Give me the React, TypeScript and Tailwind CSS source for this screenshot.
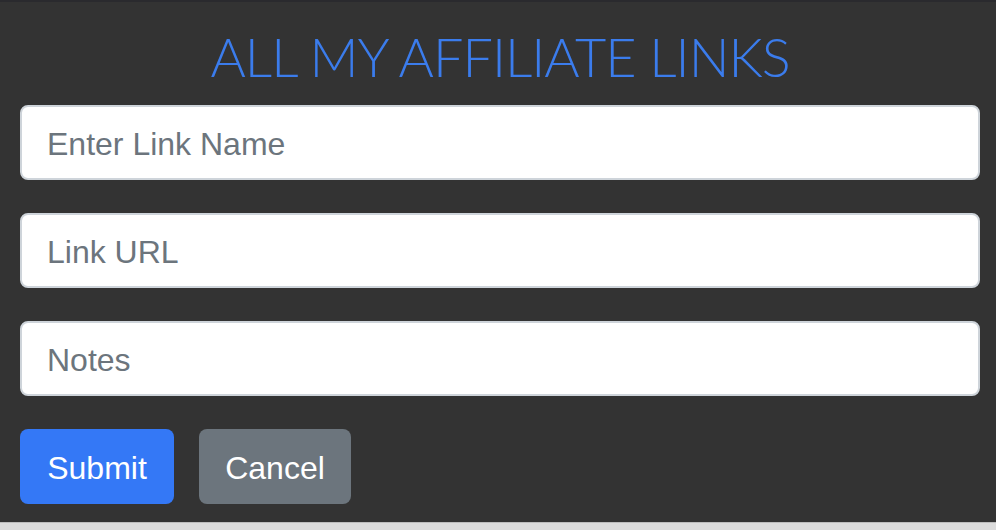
export default function App() {
  const fields = ["Enter Link Name", "Link URL", "Notes"];

  return (
    <div className="w-[996px] h-[530px] bg-[#dcdcdc] font-['Liberation_Sans',Arial,sans-serif]">
      <div className="h-[523px] bg-[#333333] border-t-2 border-[#2a2a2e] border-b border-b-[#bdbdbd] pl-5 pr-4">
        {/* Title */}
        <h1 className="pt-[27px] h-[103px] text-center text-[54px] leading-[56px] font-light text-[#3b7cec] font-['Lato',sans-serif] tracking-[-1px]">
          ALL MY AFFILIATE LINKS
        </h1>

        <form className="flex flex-col gap-[33px]">
          {fields.map((f) => (
            <input
              key={f}
              type="text"
              placeholder={f}
              className="h-[75px] w-full rounded-[8px] border-2 border-[#ced4da] bg-white px-[25px] pt-[3px] text-[32px] text-[#495057] placeholder:text-[#6c757d] outline-none"
            />
          ))}

          <div className="flex gap-[25px]">
            <button
              type="button"
              className="h-[75px] w-[154px] rounded-[8px] bg-[#3478f6] pt-[2px] text-[32px] text-white"
            >
              Submit
            </button>
            <button
              type="button"
              className="h-[75px] w-[152px] rounded-[8px] bg-[#6c757d] pt-[2px] text-[32px] text-white"
            >
              Cancel
            </button>
          </div>
        </form>
      </div>
    </div>
  );
}
